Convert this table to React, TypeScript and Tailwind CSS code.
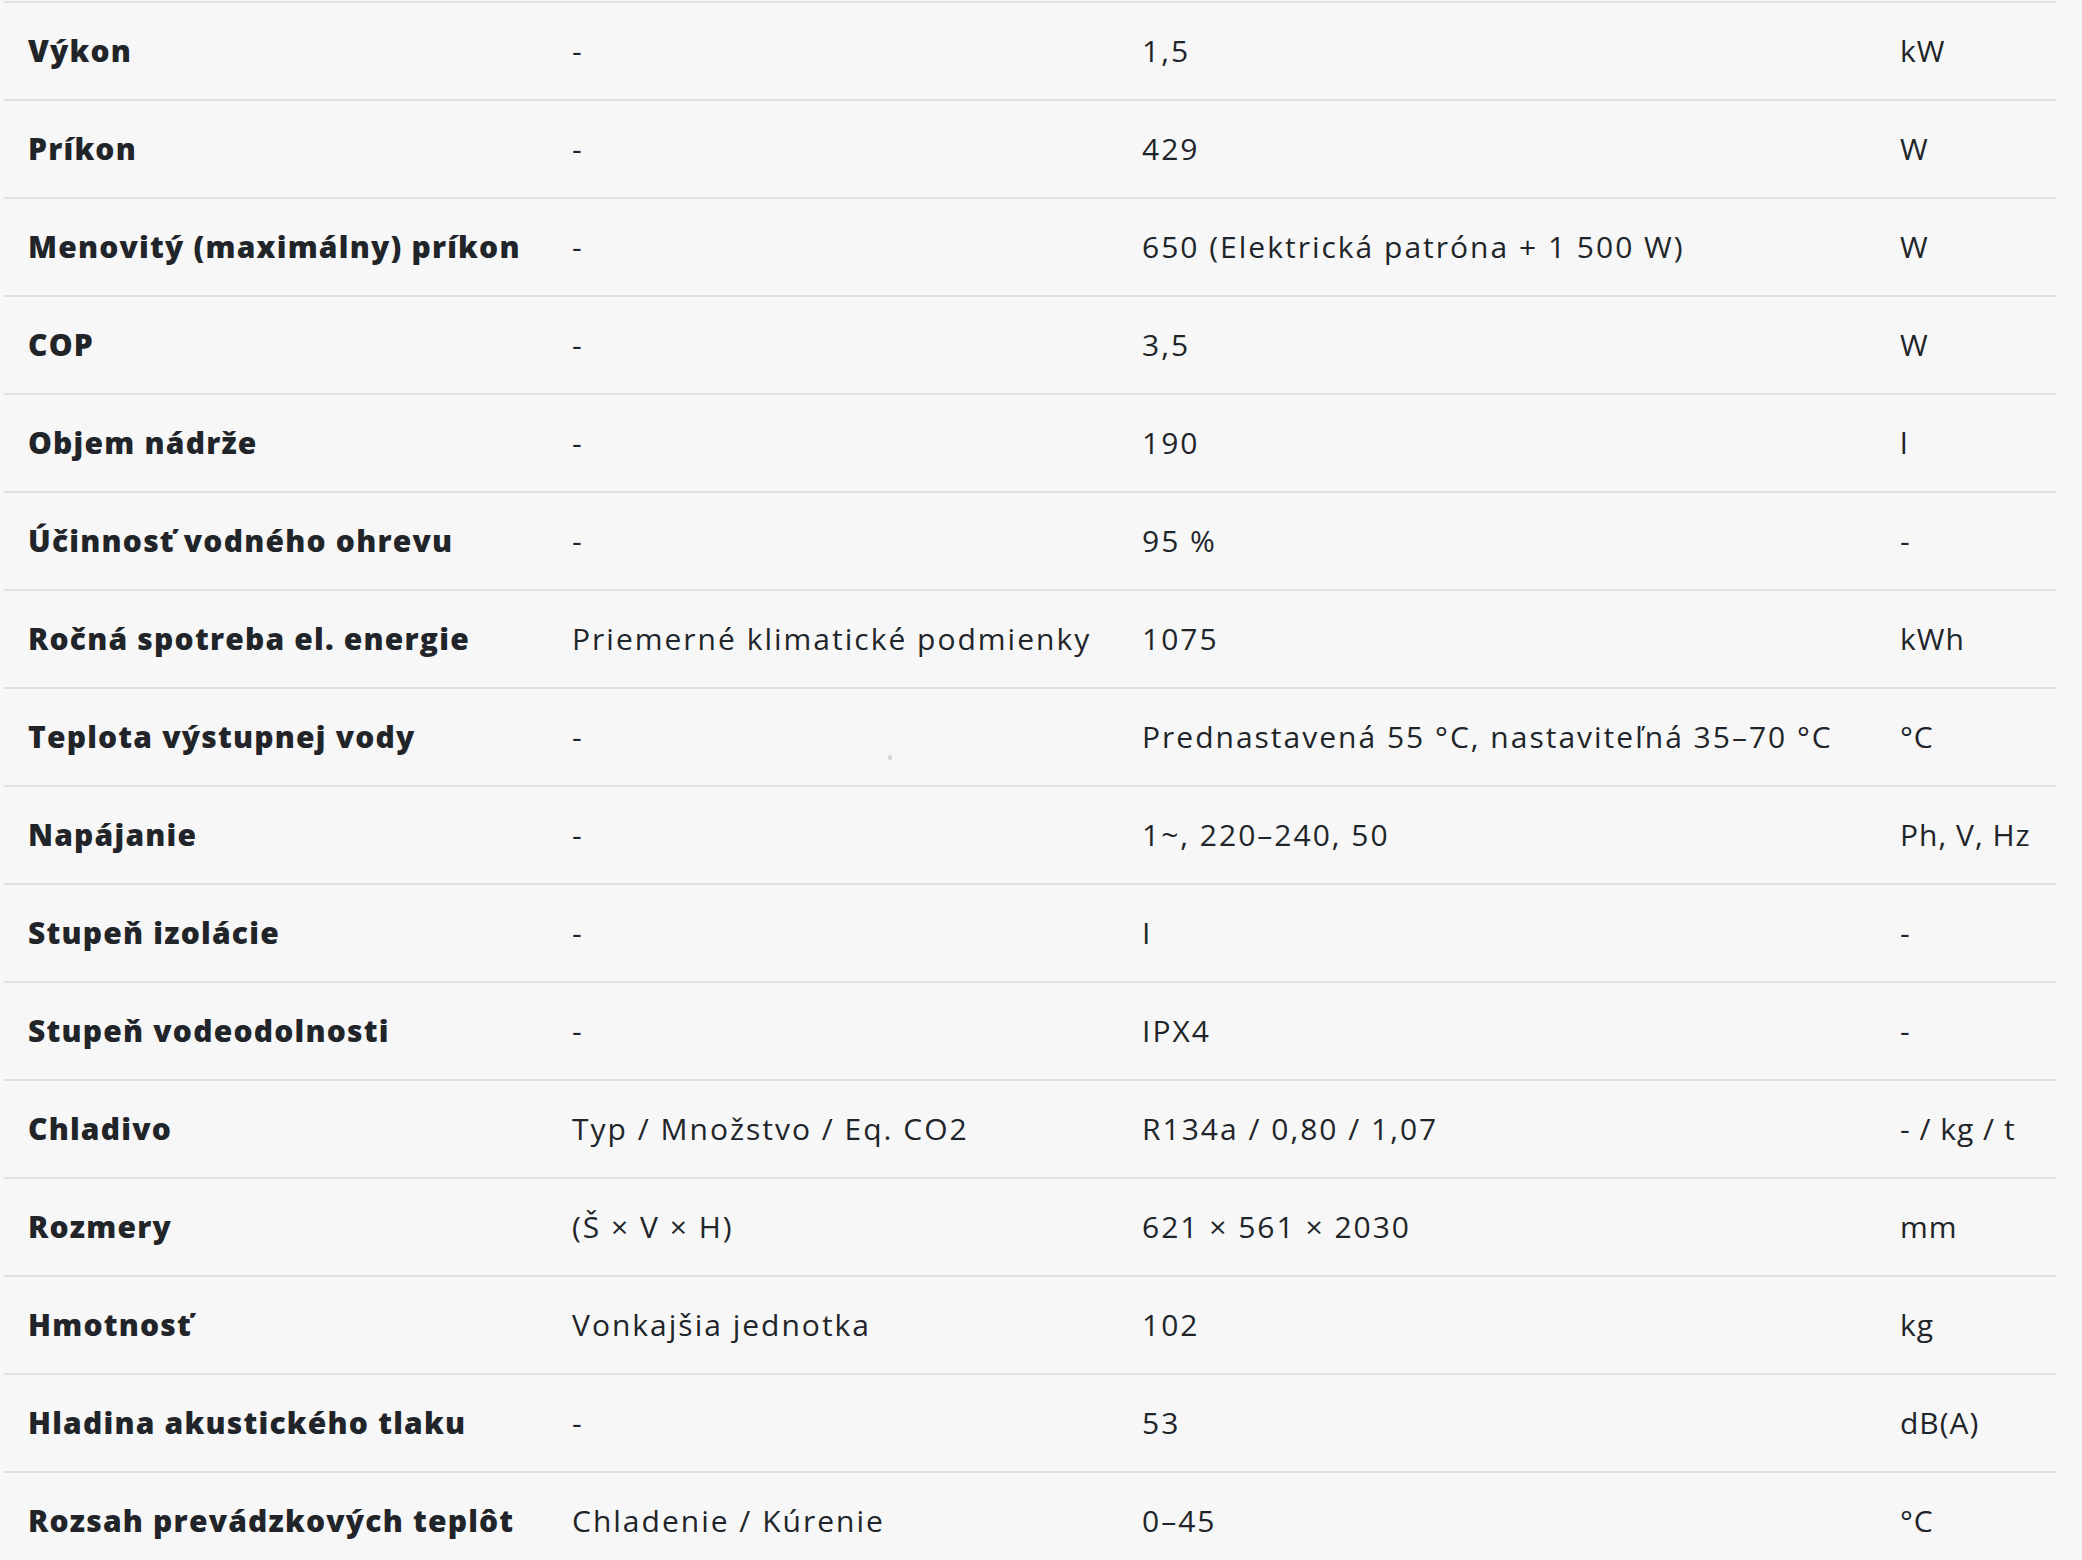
import React from "react"

const rows: [string, string, string, string][] = [
  ["Výkon", "-", "1,5", "kW"],
  ["Príkon", "-", "429", "W"],
  ["Menovitý (maximálny) príkon", "-", "650 (Elektrická patróna + 1 500 W)", "W"],
  ["COP", "-", "3,5", "W"],
  ["Objem nádrže", "-", "190", "l"],
  ["Účinnosť vodného ohrevu", "-", "95 %", "-"],
  ["Ročná spotreba el. energie", "Priemerné klimatické podmienky", "1075", "kWh"],
  ["Teplota výstupnej vody", "-", "Prednastavená 55 °C, nastaviteľná 35–70 °C", "°C"],
  ["Napájanie", "-", "1~, 220–240, 50", "Ph, V, Hz"],
  ["Stupeň izolácie", "-", "I", "-"],
  ["Stupeň vodeodolnosti", "-", "IPX4", "-"],
  ["Chladivo", "Typ / Množstvo / Eq. CO2", "R134a / 0,80 / 1,07", "- / kg / t"],
  ["Rozmery", "(Š × V × H)", "621 × 561 × 2030", "mm"],
  ["Hmotnosť", "Vonkajšia jednotka", "102", "kg"],
  ["Hladina akustického tlaku", "-", "53", "dB(A)"],
  ["Rozsah prevádzkových teplôt", "Chladenie / Kúrenie", "0–45", "°C"],
]

function SpecRow({ cells, first }: { cells: [string, string, string, string]; first: boolean }) {
  const [name, cond, value, unit] = cells
  return (
    <div
      className={
        "grid grid-cols-[544px_570px_758px_180px] items-center border-b-2 border-[#dee2e6] " +
        (first ? "border-t-2 h-[100px]" : "h-[98px]")
      }
    >
      <div className="px-6 font-extrabold tracking-[1.2px] text-[#212529]">{name}</div>
      <div className="px-6 tracking-[2px]">{cond}</div>
      <div className="px-6 tracking-[2px]">{value}</div>
      <div className="px-6 tracking-[1px]">{unit}</div>
    </div>
  )
}

export default function App() {
  return (
    <div className="relative w-[2082px] h-[1560px] overflow-hidden bg-[#f7f7f7] pl-[4px] pr-[26px] pt-[1px] text-[30px] leading-[1.2] text-[#212529] font-['Open_Sans',sans-serif]">
      <div className="flex flex-col">
        {rows.map((r, i) => (
          <SpecRow key={r[0]} cells={r} first={i === 0} />
        ))}
      </div>
      <span className="absolute left-[888px] top-[755px] w-[4px] h-[5px] rounded-full bg-[#d4d4d4]" />
    </div>
  )
}
